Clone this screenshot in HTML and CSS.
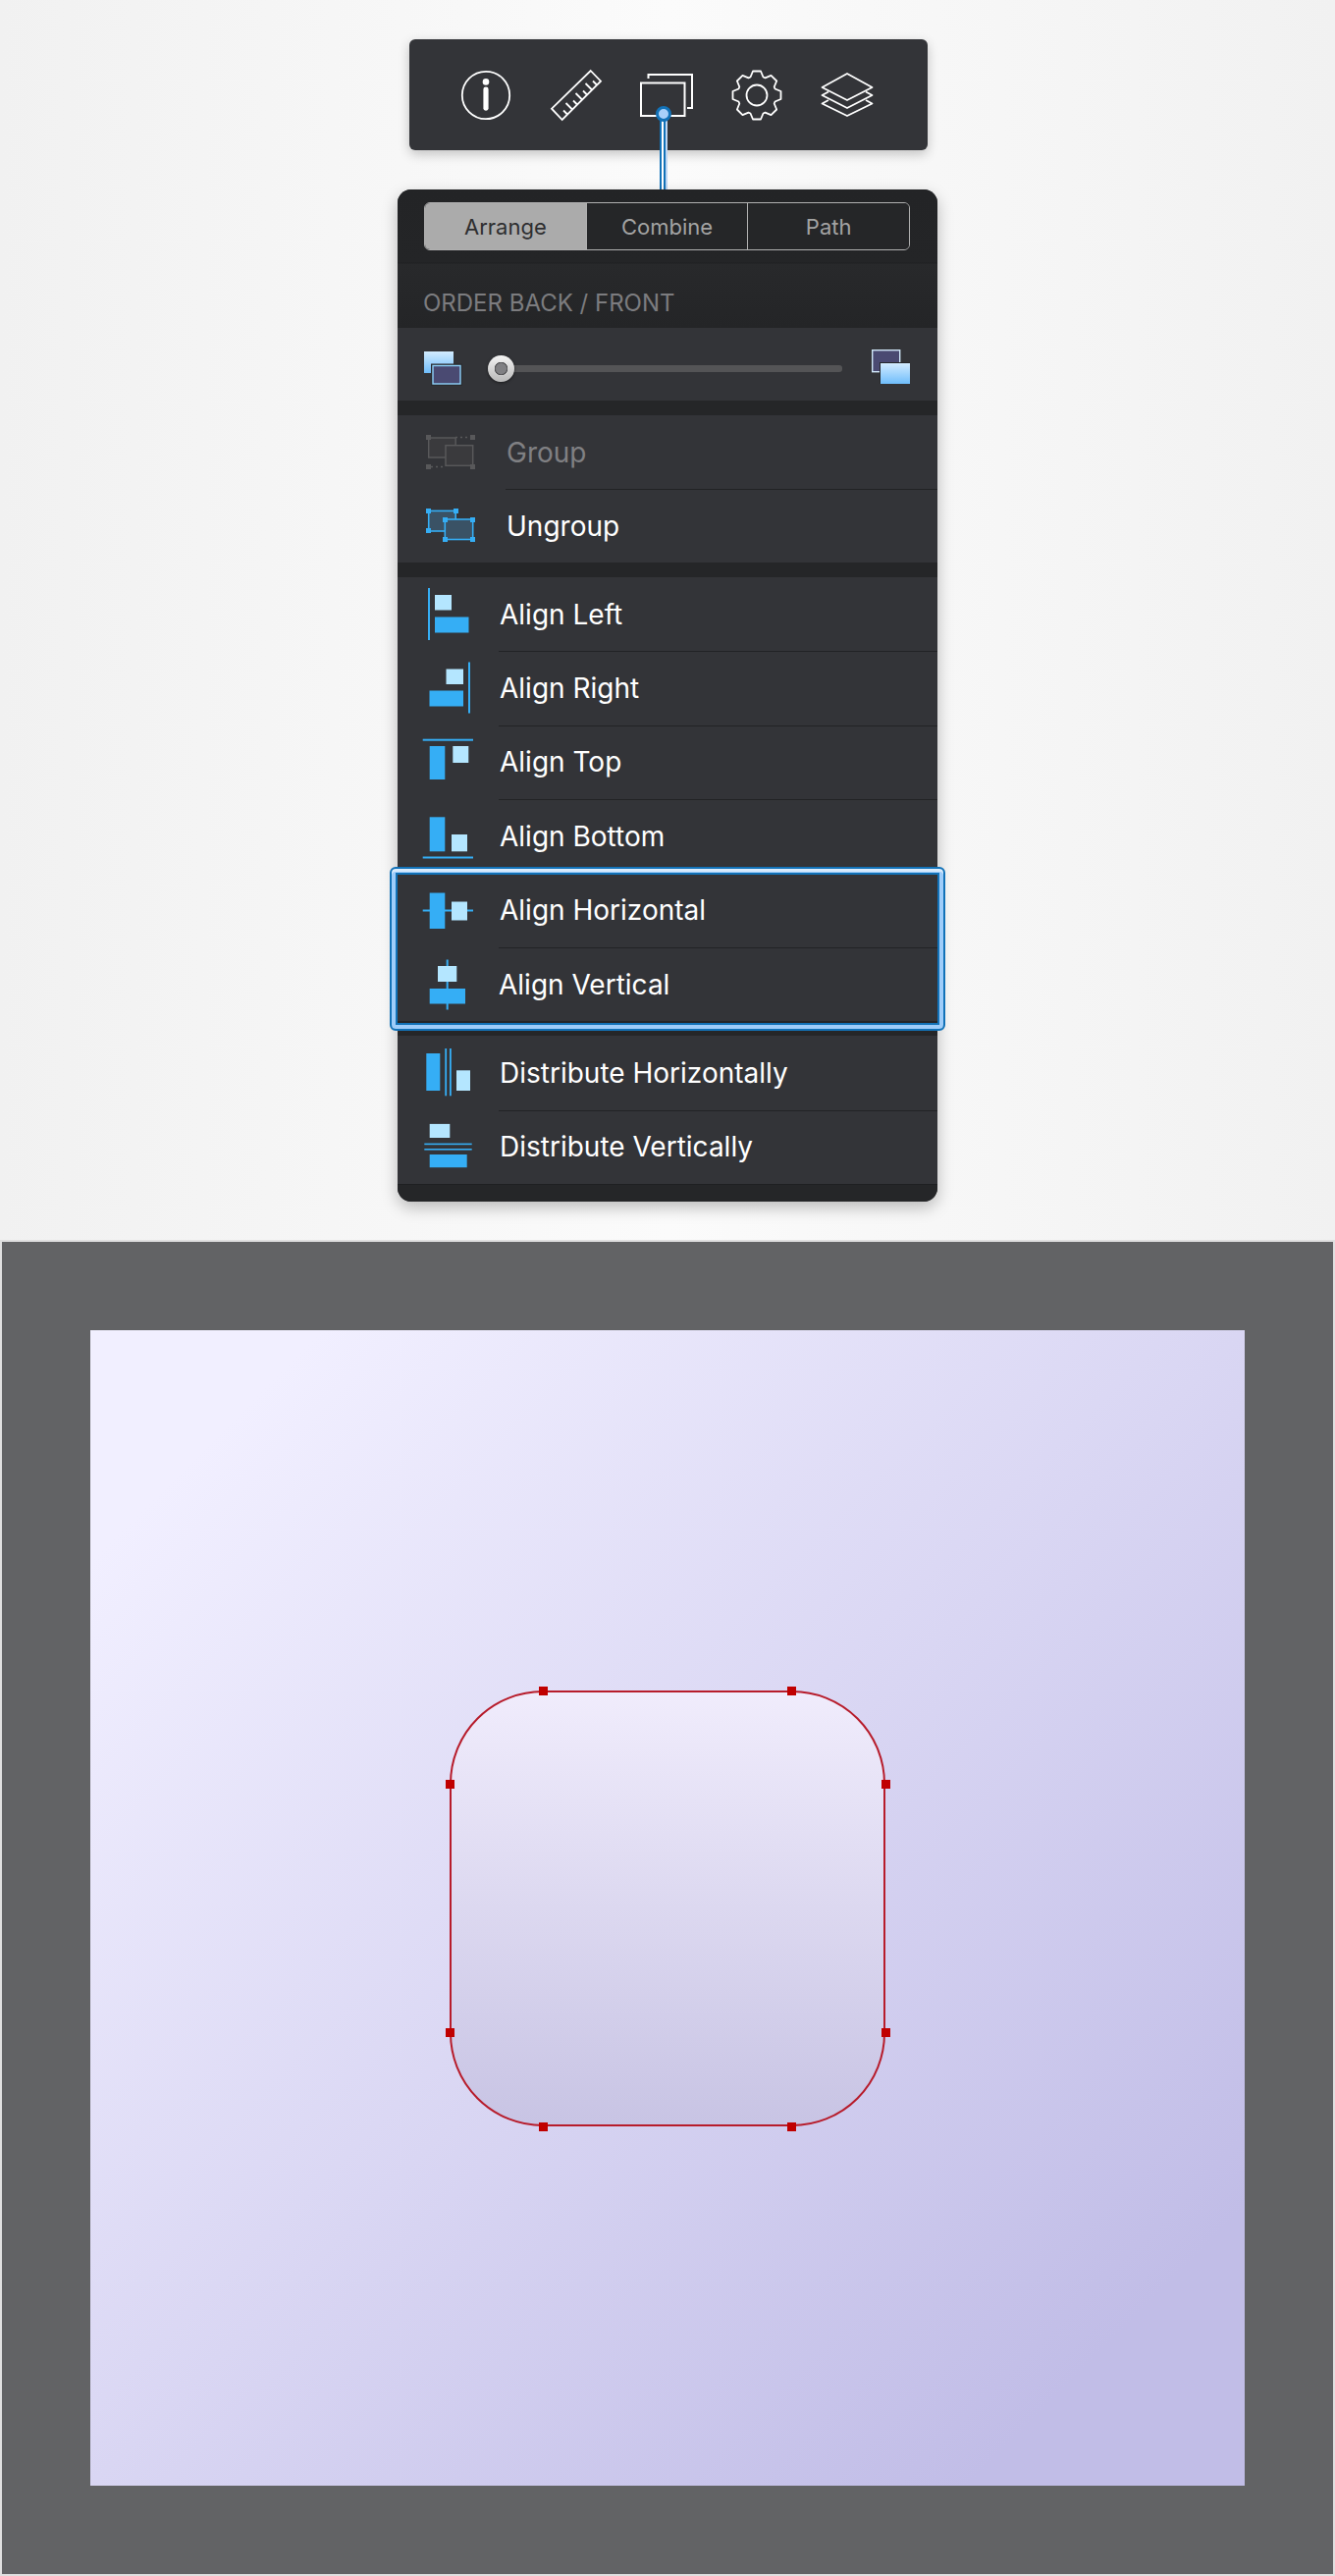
FILE: index.html
```html
<!DOCTYPE html>
<html>
<head>
  <title>Arrange panel</title>
  <link rel="stylesheet" href="styles.css">
</head>
<body>
  <div class="top">
    <div class="toolbar">
      <svg class="tool" width="52" height="52" viewBox="0 0 52 52"><circle cx="26" cy="26" r="24.2" fill="none" stroke="#fff" stroke-width="1.8"/><circle cx="26" cy="12.4" r="3.3" fill="#fff"/><rect x="23.4" y="17.5" width="5.2" height="24.2" rx="2.4" fill="#fff"/></svg>
      <svg class="tool" width="52" height="52" viewBox="0 0 52 52"><g fill="none" stroke="#fff" stroke-width="1.8"><path d="M40.7 1 L51 11.7 L11.7 51 L1 39.7 Z"/><path d="M17 45.5 l-4 -4 M22 40.5 l-6.5 -6.5 M27 35.5 l-4 -4 M32 30.5 l-6.5 -6.5 M37 25.5 l-4 -4 M42 20.5 l-6.5 -6.5 M47 15.5 l-4 -4"/></g></svg>
      <svg class="tool" width="52" height="52" viewBox="0 0 52 52"><g fill="none" stroke="#fff" stroke-width="2"><path d="M7.5 9 V5 H52 V39 H47"/><rect x="0" y="13.5" width="44.5" height="33.5"/></g></svg>
      <svg class="tool" width="52" height="52" viewBox="0 0 52 52"><g fill="none" stroke="#fff" stroke-width="1.8" stroke-linejoin="round"><circle cx="26" cy="26" r="10.5"/><polygon points="19.5,7.5 22,1.5 30,1.5 32.5,7.5 34.5,8.3 40.5,5.9 46.2,11.5 43.7,17.5 44.5,19.5 50.5,22 50.5,30 44.5,32.5 43.7,34.5 46.2,40.5 40.5,46.2 34.5,43.7 32.5,44.5 30,50.5 22,50.5 19.5,44.5 17.5,43.7 11.5,46.2 5.9,40.5 8.3,34.5 7.5,32.5 1.5,30 1.5,22 7.5,19.5 8.3,17.5 5.9,11.5 11.5,5.9 17.5,8.3"/></g></svg>
      <svg class="tool" width="52" height="52" viewBox="0 0 52 52"><g fill="none" stroke="#fff" stroke-width="1.8" stroke-linejoin="round"><path d="M26 4 L51.5 18 L26 31 L0.5 18 Z"/><path d="M7 22.5 L0.5 26 L26 39 L51.5 26 L45 22.5"/><path d="M7 31 L0.5 34.5 L26 47 L51.5 34.5 L45 31"/></g></svg>
    </div>
    <div class="wire"><span class="wire-dot"></span></div>

    <div class="panel">
      <div class="panel-head">
        <div class="tabs">
          <div class="tab tab-on">Arrange</div>
          <div class="tab">Combine</div>
          <div class="tab">Path</div>
        </div>
        <div class="order-label">ORDER BACK / FRONT</div>
      </div>

      <div class="slider-row">
        <svg class="order-icon" width="39" height="35" viewBox="0 0 39 35"><defs><linearGradient id="sq" x1="0" y1="0" x2="0" y2="1"><stop offset="0" stop-color="#d3ecff"/><stop offset="1" stop-color="#6fbdfb"/></linearGradient></defs><rect x="0" y="0" width="30" height="22" fill="url(#sq)"/><rect x="8" y="13.5" width="30" height="20.5" fill="#4a4a72" stroke="#2a2b2e" stroke-width="2"/><rect x="9" y="14.5" width="28" height="18.5" fill="#4a4a72" stroke="#8ed2fa" stroke-width="1.4"/></svg>
        <div class="track"><span class="knob"></span></div>
        <svg class="order-icon order-icon-r" width="39" height="35" viewBox="0 0 39 35"><rect x="0.7" y="0.7" width="28" height="22" fill="#4a4a72" stroke="#cfe6f8" stroke-width="1.4"/><rect x="8" y="13" width="31" height="22" fill="#26272a"/><rect x="9" y="14" width="30" height="21" fill="url(#sq)"/></svg>
      </div>

      <div class="gap"></div>

      <div class="row row-group">
        <svg class="group-icon" width="50" height="35" viewBox="0 0 50 35"><g fill="#3a3a3d" stroke="#58585a" stroke-width="1.5"><rect x="2.7" y="3" width="27.5" height="20"/><rect x="20" y="10.7" width="27.7" height="20.6"/></g><path d="M30 2.5 H45 M5 32.5 H20" stroke="#58585a" stroke-width="1.3" stroke-dasharray="2 3"/><g fill="#58585a"><rect x="0" y="0" width="5" height="5"/><rect x="45" y="0" width="5" height="5"/><rect x="0" y="30" width="5" height="5"/><rect x="45" y="30" width="5" height="5"/></g></svg>
        <div class="row-text muted">Group</div>
      </div>
      <div class="row row-group">
        <svg class="group-icon" width="50" height="35" viewBox="0 0 50 35"><g fill="#3a5265" stroke="#35aef5" stroke-width="1.6"><rect x="2.7" y="2.4" width="27.5" height="20.6"/><rect x="19.3" y="11" width="28.4" height="20.5"/></g><g fill="#35aef5"><rect x="0" y="0" width="5" height="5"/><rect x="28" y="0" width="5" height="5"/><rect x="0" y="20" width="5" height="5"/><rect x="17" y="9" width="5" height="5"/><rect x="45" y="9" width="5" height="5"/><rect x="17" y="29" width="5" height="5"/><rect x="45" y="29" width="5" height="5"/></g></svg>
        <div class="row-text">Ungroup</div>
      </div>

      <div class="gap"></div>

      <div class="row">
        <svg class="icon" width="52" height="54" viewBox="0 0 52 54"><rect x="6" y="0" width="2" height="53" fill="#35aef5"/><rect x="13" y="7" width="17" height="15.5" fill="#b4e6ff"/><rect x="13" y="29.5" width="34.5" height="16" fill="#35aef5"/></svg>
        <div class="row-text">Align Left</div>
      </div>
      <div class="row">
        <svg class="icon" width="52" height="54" viewBox="0 0 52 54"><rect x="47" y="0.5" width="2" height="52" fill="#35aef5"/><rect x="24.5" y="7.5" width="17.5" height="15.5" fill="#b4e6ff"/><rect x="7.5" y="29.5" width="34.5" height="16" fill="#35aef5"/></svg>
        <div class="row-text">Align Right</div>
      </div>
      <div class="row">
        <svg class="icon" width="52" height="54" viewBox="0 0 52 54"><rect x="0.7" y="3.7" width="51.5" height="2" fill="#35aef5"/><rect x="7.7" y="11" width="15.6" height="34" fill="#35aef5"/><rect x="31.3" y="11" width="16" height="17" fill="#b4e6ff"/></svg>
        <div class="row-text">Align Top</div>
      </div>
      <div class="row">
        <svg class="icon" width="52" height="54" viewBox="0 0 52 54"><rect x="0.7" y="47.5" width="51.5" height="2" fill="#35aef5"/><rect x="7.7" y="7.3" width="15.6" height="35" fill="#35aef5"/><rect x="30" y="25" width="16" height="17.3" fill="#b4e6ff"/></svg>
        <div class="row-text">Align Bottom</div>
      </div>
      <div class="row">
        <svg class="icon" width="52" height="54" viewBox="0 0 52 54"><rect x="0.7" y="26.5" width="52" height="2" fill="#35aef5"/><rect x="7.7" y="9.5" width="15.6" height="36.5" fill="#35aef5"/><rect x="30" y="18.5" width="16" height="19" fill="#b4e6ff"/></svg>
        <div class="row-text">Align Horizontal</div>
      </div>
      <div class="row">
        <svg class="icon" width="52" height="54" viewBox="0 0 52 54"><rect x="24.7" y="1.5" width="2" height="51" fill="#35aef5"/><rect x="16" y="8" width="19.3" height="16" fill="#b4e6ff"/><rect x="7.7" y="31" width="36.3" height="15.5" fill="#35aef5"/></svg>
        <div class="row-text row-text-v">Align Vertical</div>
      </div>

      <div class="gap"></div>

      <div class="row">
        <svg class="icon" width="52" height="54" viewBox="0 0 52 54"><rect x="4.3" y="7" width="14" height="38" fill="#35aef5"/><rect x="23.3" y="2" width="1.8" height="48.3" fill="#35aef5"/><rect x="28" y="2" width="1.8" height="48.3" fill="#35aef5"/><rect x="35" y="24.3" width="14" height="20.7" fill="#b4e6ff"/></svg>
        <div class="row-text">Distribute Horizontally</div>
      </div>
      <div class="row">
        <svg class="icon" width="52" height="54" viewBox="0 0 52 54"><rect x="7.7" y="3.9" width="20.6" height="14.1" fill="#b4e6ff"/><rect x="2.3" y="23.6" width="48.4" height="1.6" fill="#35aef5"/><rect x="2.3" y="29" width="48.4" height="1.6" fill="#35aef5"/><rect x="7.7" y="35" width="38" height="13.2" fill="#35aef5"/></svg>
        <div class="row-text">Distribute Vertically</div>
      </div>

      <div class="panel-foot"></div>
      <div class="focus-box"></div>
    </div>
  </div>

  <div class="canvas">
    <div class="artboard">
      <div class="shape">
        <span class="pt pt-t1"></span><span class="pt pt-t2"></span>
        <span class="pt pt-l1"></span><span class="pt pt-l2"></span>
        <span class="pt pt-r1"></span><span class="pt pt-r2"></span>
        <span class="pt pt-b1"></span><span class="pt pt-b2"></span>
      </div>
    </div>
  </div>
</body>
</html>
```
FILE: styles.css
```css
body {
  margin: 0;
  font-family: Inter, "Liberation Sans", sans-serif;
  background: #fff;
}

.top {
  height: 1263px;
  box-sizing: border-box;
  padding-top: 40px;
  background: linear-gradient(90deg, #f1f1f1 0%, #fbfbfb 50%, #f1f1f1 100%);
  display: flex;
  flex-direction: column;
  align-items: center;
}

/* toolbar */
.toolbar {
  width: 528px;
  height: 113px;
  margin-left: 2px;
  box-sizing: border-box;
  padding-left: 52px;
  display: flex;
  align-items: center;
  gap: 40px;
  background: #333438;
  border-radius: 6px;
  box-shadow: 0 4px 12px rgba(0, 0, 0, 0.22);
}

.tool {
  display: block;
  flex: none;
  overflow: visible;
}

.wire {
  width: 8px;
  height: 40px;
  margin-left: -8px;
  background: linear-gradient(90deg, #1272b8 0 2px, #fff 2px 4px, #1272b8 4px 6px, #bcd6f4 6px 8px);
  position: relative;
}

.wire::before {
  content: "";
  position: absolute;
  left: 0;
  top: -33px;
  width: 8px;
  height: 33px;
  background: linear-gradient(90deg, #1272b8 0 2px, #fff 2px 4px, #1272b8 4px 6px, #bcd6f4 6px 8px);
}

.wire-dot {
  position: absolute;
  z-index: 1;
  left: -4px;
  top: -45px;
  width: 10px;
  height: 10px;
  background: #a8d0fa;
  border: 3px solid #1272b8;
  border-radius: 50%;
}

/* panel */
.panel {
  width: 550px;
  height: 1031px;
  position: relative;
  background: #252628;
  border-radius: 14px;
  box-shadow: 0 6px 16px rgba(0, 0, 0, 0.25);
  display: flex;
  flex-direction: column;
}

.panel-head {
  height: 141px;
  flex: none;
  box-sizing: border-box;
  padding-top: 13px;
  border-radius: 14px 14px 0 0;
  background: linear-gradient(180deg, #232426 0, #242527 74px, #1f2022 75px, #28292b 76px, #242527 100%);
}

.tabs {
  display: flex;
  width: 495px;
  height: 49px;
  margin-left: 27px;
  box-sizing: border-box;
  border: 1px solid #b0b0b0;
  border-radius: 6px;
  overflow: hidden;
}

.tab {
  flex: 1;
  display: flex;
  align-items: center;
  justify-content: center;
  font-size: 22px;
  color: #a3a3a3;
  background: #252628;
}

.tab + .tab {
  border-left: 1px solid #b0b0b0;
}

.tab-on {
  background: #ababab;
  color: #2e2e30;
}

.order-label {
  margin: 40px 0 0 26px;
  font-size: 24px;
  line-height: 27px;
  color: #7c7c7f;
}

.slider-row {
  height: 74px;
  flex: none;
  box-sizing: border-box;
  padding: 6px 28px 0 27px;
  display: flex;
  align-items: center;
  background: #333438;
}

.order-icon {
  flex: none;
  margin-top: 2px;
}

.order-icon-r {
  margin-top: -1px;
}

.track {
  flex: 1;
  height: 7px;
  margin: 3px 30px 0 26px;
  position: relative;
  background: #545456;
  border-radius: 3px;
}

.knob {
  position: absolute;
  left: 0;
  top: -10px;
  width: 27px;
  height: 27px;
  border-radius: 50%;
  background: radial-gradient(circle, #808083 0 5px, #4c4c4e 6.5px, transparent 7px), linear-gradient(180deg, #f4f4f4, #b8b8b8);
  box-shadow: 0 1px 3px rgba(0, 0, 0, 0.5);
}

.gap {
  height: 15px;
  flex: none;
  background: #252628;
}

.row {
  height: 75.4px;
  flex: none;
  display: flex;
  align-items: center;
  position: relative;
  background: #333438;
}

.row-group {
  height: 75px;
}

.row + .row::before {
  content: "";
  position: absolute;
  left: 103px;
  right: 0;
  top: 0;
  height: 1px;
  background: #222325;
}

.row-group + .row-group::before {
  left: 110px;
}

.icon {
  flex: none;
  margin-left: 25px;
}

.group-icon {
  flex: none;
  margin-left: 29px;
}

.row-text {
  margin-left: 27px;
  font-size: 28px;
  color: #fff;
}

.row-group .row-text {
  margin-left: 32px;
}

.row-text-v {
  margin-left: 26px;
}

.row-group .muted {
  color: #808083;
}

.panel-foot {
  flex: 1;
  border-top: 1px solid #1f2022;
  border-radius: 0 0 14px 14px;
  background: #252628;
}

.focus-box {
  position: absolute;
  left: -8px;
  top: 690px;
  width: 566px;
  height: 167px;
  box-sizing: border-box;
  border: 2px solid #1272b8;
  border-radius: 6px;
  box-shadow: inset 0 3px 0 #d8eafc, inset 0 0 0 4px #9fcdfa, inset 0 0 0 6px #1272b8;
}

/* canvas */
.canvas {
  height: 1361px;
  box-sizing: border-box;
  padding: 90px;
  background: #626365;
  border: 2px solid #e0e0e0;
}

.artboard {
  height: 1177px;
  display: flex;
  align-items: center;
  justify-content: center;
  background: linear-gradient(135deg, #f1efff 0%, #f1efff 10%, #d9d6f3 50%, #c1bde7 88%, #c1bde7 100%);
}

.shape {
  width: 444px;
  height: 444px;
  box-sizing: border-box;
  position: relative;
  border: 2px solid #b71c2b;
  border-radius: 95px;
  background: linear-gradient(180deg, #f0ecfc 0%, #c8c4e4 100%);
}

.pt {
  position: absolute;
  width: 9px;
  height: 9px;
  background: #c00000;
}

.pt-t1 { left: 89px; top: -6px; }
.pt-t2 { left: 342px; top: -6px; }
.pt-b1 { left: 89px; bottom: -7px; }
.pt-b2 { left: 342px; bottom: -7px; }
.pt-l1 { left: -6px; top: 89px; }
.pt-l2 { left: -6px; top: 342px; }
.pt-r1 { right: -7px; top: 89px; }
.pt-r2 { right: -7px; top: 342px; }
```
